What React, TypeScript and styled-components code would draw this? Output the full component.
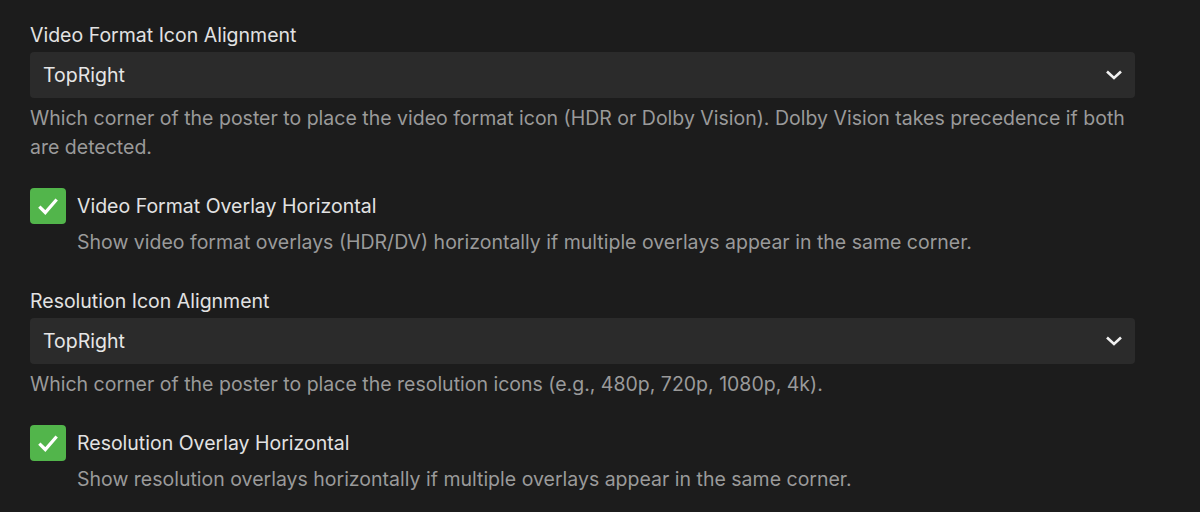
import React from 'react'
import styled, { createGlobalStyle } from 'styled-components'

const GlobalStyle = createGlobalStyle`
  html, body {
    margin: 0;
    padding: 0;
    background: #1c1c1c;
  }
  body {
    font-family: Inter, "Noto Sans", sans-serif;
    -webkit-font-smoothing: antialiased;
  }
`

const Page = styled.div`
  width: 1105px;
  padding: 23px 0 0 30px;
  display: flex;
  flex-direction: column;
`

const SelectField = styled.div`
  display: flex;
  flex-direction: column;
  margin-bottom: 26px;
`

const FieldLabel = styled.label`
  font-size: 19.5px;
  line-height: 24px;
  color: #e2e2e2;
  margin-bottom: 5px;
`

const SelectBox = styled.div`
  position: relative;
  height: 46px;
  display: flex;
  align-items: center;
  padding: 0 13px;
  background: #2b2b2b;
  border-radius: 4px;
  font-size: 19.5px;
  color: #e6e6e6;
`

const Chevron = styled.svg`
  position: absolute;
  right: 12px;
  top: 15px;
`

const Description = styled.div<{ $indent?: boolean }>`
  font-size: 19.5px;
  line-height: 29px;
  color: #9a9a9a;
  margin-top: ${(p) => (p.$indent ? '4px' : '6px')};
  padding-left: ${(p) => (p.$indent ? '47px' : '0')};
`

const CheckField = styled.div`
  display: flex;
  flex-direction: column;
  margin-bottom: 32px;
`

const CheckRow = styled.div`
  display: flex;
  align-items: center;
  gap: 11px;
`

const Box = styled.span`
  width: 36px;
  height: 36px;
  border-radius: 4px;
  background: #52b54b;
  display: flex;
  align-items: center;
  justify-content: center;
`

const CheckLabel = styled.span`
  font-size: 19.5px;
  color: #e2e2e2;
`

const Select = ({ label, value, desc }: { label: string; value: string; desc: React.ReactNode }) => (
  <SelectField>
    <FieldLabel>{label}</FieldLabel>
    <SelectBox>
      {value}
      <Chevron width="18" height="16" viewBox="0 0 18 16">
        <path d="M2 4.5 L9 11 L16 4.5" fill="none" stroke="#f0f0f0" strokeWidth="2.6" />
      </Chevron>
    </SelectBox>
    <Description>{desc}</Description>
  </SelectField>
)

const Check = ({ label, desc }: { label: string; desc: string }) => (
  <CheckField>
    <CheckRow>
      <Box>
        <svg width="26" height="26" viewBox="0 0 24 24">
          <path d="M4 12.5 L9.5 18 L20 6" fill="none" stroke="#fff" strokeWidth="3" />
        </svg>
      </Box>
      <CheckLabel>{label}</CheckLabel>
    </CheckRow>
    <Description $indent>{desc}</Description>
  </CheckField>
)

export default function App() {
  return (
    <>
      <GlobalStyle />
      <Page>
        <Select
          label="Video Format Icon Alignment"
          value="TopRight"
          desc="Which corner of the poster to place the video format icon (HDR or Dolby Vision). Dolby Vision takes precedence if both are detected."
        />
        <Check
          label="Video Format Overlay Horizontal"
          desc="Show video format overlays (HDR/DV) horizontally if multiple overlays appear in the same corner."
        />
        <Select
          label="Resolution Icon Alignment"
          value="TopRight"
          desc="Which corner of the poster to place the resolution icons (e.g., 480p, 720p, 1080p, 4k)."
        />
        <Check
          label="Resolution Overlay Horizontal"
          desc="Show resolution overlays horizontally if multiple overlays appear in the same corner."
        />
      </Page>
    </>
  )
}
